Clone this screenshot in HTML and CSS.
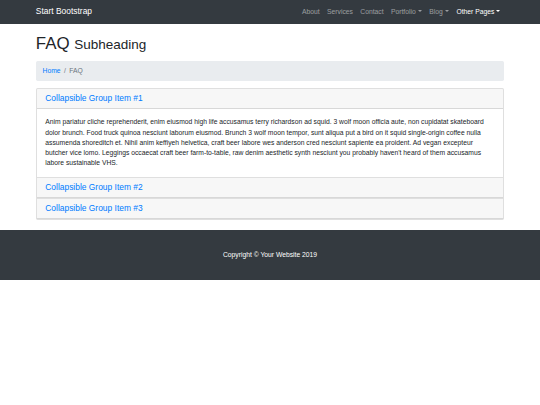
FILE: index.html
```html
<!DOCTYPE html>
<html lang="en">
<head>
<meta charset="utf-8">
<title>FAQ - Start Bootstrap</title>
<link rel="stylesheet" href="styles.css">
</head>
<body>
<nav class="navbar">
  <div class="container nav-inner">
    <a class="brand" href="#">Start Bootstrap</a>
    <ul class="nav-links">
      <li><a class="nav-link" href="#">About</a></li>
      <li><a class="nav-link" href="#">Services</a></li>
      <li><a class="nav-link" href="#">Contact</a></li>
      <li><a class="nav-link dropdown" href="#">Portfolio</a></li>
      <li><a class="nav-link dropdown" href="#">Blog</a></li>
      <li><a class="nav-link dropdown active" href="#">Other Pages</a></li>
    </ul>
  </div>
</nav>

<main class="container page">
  <h1 class="title">FAQ <small>Subheading</small></h1>

  <ol class="breadcrumb">
    <li class="crumb"><a href="#">Home</a></li>
    <li class="crumb current">FAQ</li>
  </ol>

  <div class="accordion">
    <div class="card">
      <div class="card-header"><h5 class="card-title"><a href="#">Collapsible Group Item #1</a></h5></div>
      <div class="card-body">Anim pariatur cliche reprehenderit, enim eiusmod high life accusamus terry richardson ad squid. 3 wolf moon officia aute, non cupidatat skateboard dolor brunch. Food truck quinoa nesciunt laborum eiusmod. Brunch 3 wolf moon tempor, sunt aliqua put a bird on it squid single-origin coffee nulla assumenda shoreditch et. Nihil anim keffiyeh helvetica, craft beer labore wes anderson cred nesciunt sapiente ea proident. Ad vegan excepteur butcher vice lomo. Leggings occaecat craft beer farm-to-table, raw denim aesthetic synth nesciunt you probably haven't heard of them accusamus labore sustainable VHS.</div>
    </div>
    <div class="card">
      <div class="card-header"><h5 class="card-title"><a href="#">Collapsible Group Item #2</a></h5></div>
    </div>
    <div class="card">
      <div class="card-header"><h5 class="card-title"><a href="#">Collapsible Group Item #3</a></h5></div>
    </div>
  </div>
</main>

<footer class="footer">
  <p class="copyright">Copyright &copy; Your Website 2019</p>
</footer>
</body>
</html>
```

FILE: styles.css
```css
* { box-sizing: border-box; }
html, body { margin: 0; padding: 0; }
body {
  font-family: "Liberation Sans", Arial, sans-serif;
  font-size: 6.75px;
  line-height: 1.5;
  color: #212529;
  background: #fff;
}
a { text-decoration: none; color: #007bff; }

.container {
  width: 481px;
  margin: 0 auto;
  padding: 0 6.33px;
}

.navbar {
  background: #343a40;
  height: 23.6px;
}
.nav-inner {
  display: flex;
  align-items: center;
  justify-content: space-between;
  height: 100%;
}
.brand {
  color: #fff;
  font-size: 8.44px;
  line-height: 1.5;
}
.nav-links {
  list-style: none;
  margin: 0;
  padding: 0;
  display: flex;
}
.nav-link {
  display: block;
  padding: 3.375px 3.7px;
  color: rgba(255,255,255,.5);
}
.nav-link.active { color: #fff; }
.dropdown::after {
  content: "";
  display: inline-block;
  margin-left: 2.2px;
  vertical-align: 1.72px;
  border-top: 2.03px solid;
  border-right: 2.03px solid transparent;
  border-left: 2.03px solid transparent;
}

.page { padding-bottom: 10.125px; }

.title {
  margin: 10.125px 0 6.75px;
  font-size: 16.875px;
  font-weight: 500;
  line-height: 1.2;
}
.title small { font-size: 80%; font-weight: 400; }

.breadcrumb {
  display: flex;
  list-style: none;
  margin: 0 0 6.75px;
  padding: 5.06px 6.75px;
  background: #e9ecef;
  border-radius: 1.7px;
}
.crumb + .crumb { padding-left: 3.375px; }
.crumb + .crumb::before {
  content: "/";
  padding-right: 3.375px;
  color: #6c757d;
}
.crumb.current { color: #6c757d; }

.accordion {
  display: flex;
  flex-direction: column;
}
.card {
  border: 1px solid rgba(0,0,0,.125);
  background: #fff;
}
.card + .card { border-top: 0; }
.card:first-child { border-radius: 1.7px 1.7px 0 0; }
.card:last-child { border-radius: 0 0 1.7px 1.7px; }
.card-header {
  padding: 4.6px 8.44px;
  background: rgba(0,0,0,.03);
  border-bottom: 1px solid rgba(0,0,0,.125);
}
.card-title {
  margin: 0;
  font-size: 8.44px;
  font-weight: 500;
  line-height: 1.2;
}
.card-body {
  padding: 8.44px;
}

.footer {
  background: #343a40;
  padding: 20px 0;
}
.copyright {
  margin: 0;
  text-align: center;
  color: #fff;
}
```
